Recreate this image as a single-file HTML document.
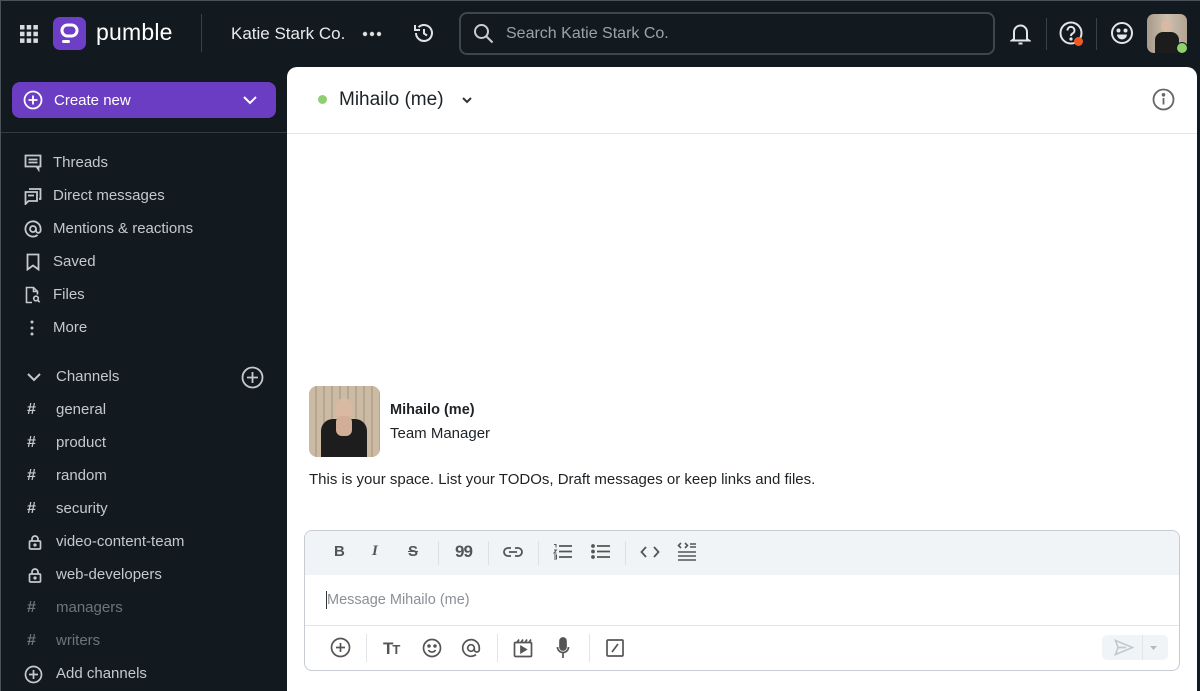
<!DOCTYPE html>
<html><head><meta charset="utf-8"><style>
*{box-sizing:border-box;margin:0;padding:0}
html,body{width:1200px;height:691px;overflow:hidden}
body{background:#131a1f;font-family:"Liberation Sans",sans-serif;position:relative}
body:after{content:"";position:absolute;left:0;top:0;width:1200px;height:691px;border:1px solid #4a5157;pointer-events:none}
.a{position:absolute;white-space:nowrap}
svg{display:block}
.nav{position:absolute;left:24px;color:#c4c9ce;font-size:15px;display:flex;align-items:center;height:22px}
.nav .t{position:absolute;left:29px;white-space:nowrap;top:2px}
.ch .t{left:32px}
.dim{color:#6d757c}
.tb svg{position:absolute}
</style></head><body>
<!-- top bar -->
<svg class="a" style="left:20px;top:25px" width="18" height="18" viewBox="0 0 18 18" fill="#d9dcdf"><rect x="0" y="0" width="4.5" height="4.5"/><rect x="6.7" y="0" width="4.5" height="4.5"/><rect x="13.4" y="0" width="4.5" height="4.5"/><rect x="0" y="6.7" width="4.5" height="4.5"/><rect x="6.7" y="6.7" width="4.5" height="4.5"/><rect x="13.4" y="6.7" width="4.5" height="4.5"/><rect x="0" y="13.4" width="4.5" height="4.5"/><rect x="6.7" y="13.4" width="4.5" height="4.5"/><rect x="13.4" y="13.4" width="4.5" height="4.5"/></svg>
<div class="a" style="left:53px;top:17px;width:33px;height:33px;border-radius:7px;background:#6d3fc6"></div>
<svg class="a" style="left:53px;top:17px" width="33" height="33" viewBox="0 0 33 33"><rect x="9" y="8" width="15" height="11" rx="5.5" fill="none" stroke="#fff" stroke-width="3"/><rect x="9" y="23" width="8" height="3" rx="1.5" fill="#fff"/></svg>
<div class="a" style="left:96px;top:19px;color:#fff;font-size:23px;font-weight:500;letter-spacing:.2px">pumble</div>
<div class="a" style="left:201px;top:14px;width:1px;height:38px;background:#3a4249"></div>
<div class="a" style="left:231px;top:24px;color:#e8eaec;font-size:17px">Katie Stark Co.</div>
<svg class="a" style="left:362px;top:31px" width="20" height="6"><circle cx="3" cy="3" r="2.2" fill="#ddd"/><circle cx="10" cy="3" r="2.2" fill="#ddd"/><circle cx="17" cy="3" r="2.2" fill="#ddd"/></svg>
<svg class="a" style="left:412px;top:21px" width="24" height="24" viewBox="0 0 24 24" fill="none" stroke="#e0e3e5" stroke-width="2"><path d="M4 12a8 8 0 1 0 2.5-5.8"/><path d="M3 4v5h5" /><path d="M12 8v4.5l3 2"/></svg>
<div class="a" style="left:459px;top:12px;width:536px;height:43px;border:2px solid #3d4750;border-radius:8px"></div>
<svg class="a" style="left:473px;top:23px" width="22" height="22" viewBox="0 0 22 22" fill="none" stroke="#c9cdd1" stroke-width="2"><circle cx="8.5" cy="8.5" r="6.5"/><path d="M13.5 13.5l6 6"/></svg>
<div class="a" style="left:506px;top:25px;color:#9aa3ab;font-size:16px">Search Katie Stark Co.</div>
<svg class="a" style="left:1010px;top:22px" width="21" height="24" viewBox="0 0 21 24" fill="none" stroke="#e3e5e7" stroke-width="2"><path d="M4 17V10a6.5 6.5 0 0 1 13 0v7l2 1.5H2z"/><path d="M8.5 21.5h4"/></svg>
<div class="a" style="left:1046px;top:18px;width:1px;height:32px;background:#3a4249"></div>
<svg class="a" style="left:1059px;top:21px" width="28" height="28" viewBox="0 0 28 28" fill="none" stroke="#e3e5e7" stroke-width="2"><circle cx="12" cy="12" r="10.5"/><path d="M8.5 9.5a3.5 3.5 0 1 1 5 3c-1 .6-1.5 1.2-1.5 2.5"/><circle cx="12" cy="18" r=".6" fill="#e3e5e7"/><circle cx="19.5" cy="20.5" r="4.5" fill="#ef5a24" stroke="none"/></svg>
<div class="a" style="left:1096px;top:18px;width:1px;height:32px;background:#3a4249"></div>
<svg class="a" style="left:1110px;top:21px" width="24" height="24" viewBox="0 0 24 24" fill="none" stroke="#e3e5e7" stroke-width="2"><circle cx="12" cy="12" r="10"/><circle cx="8.5" cy="9.5" r="1" fill="#e3e5e7"/><circle cx="15.5" cy="9.5" r="1" fill="#e3e5e7"/><path d="M7 13.5h10a5 5 0 0 1-10 0z" fill="#e3e5e7" stroke="none"/></svg>
<div class="a" style="left:1147px;top:14px;width:40px;height:39px;border-radius:7px;overflow:hidden;background:linear-gradient(90deg,#a8998a,#cdbfae 50%,#b3a493)">
<div class="a" style="left:14px;top:6px;width:11px;height:12px;border-radius:50%;background:#d7b9a4"></div>
<div class="a" style="left:8px;top:18px;width:24px;height:22px;border-radius:8px 8px 0 0;background:#1c1c1c"></div></div>
<div class="a" style="left:1176px;top:42px;width:12px;height:12px;border-radius:50%;background:#8fd16b;border:1.5px solid #131a1f"></div>

<!-- sidebar -->
<div class="a" style="left:12px;top:82px;width:264px;height:36px;border-radius:8px;background:#6a3dc2"></div>
<svg class="a" style="left:23px;top:90px" width="20" height="20" viewBox="0 0 20 20" fill="none" stroke="#fff" stroke-width="1.8"><circle cx="10" cy="10" r="8.5"/><path d="M10 5.5v9M5.5 10h9"/></svg>
<div class="a" style="left:54px;top:92px;color:#fff;font-size:15px">Create new</div>
<svg class="a" style="left:242px;top:94px" width="16" height="12" viewBox="0 0 16 12" fill="none" stroke="#fff" stroke-width="2"><path d="M2 3l6 6 6-6"/></svg>
<div class="a" style="left:0;top:132px;width:287px;height:1px;background:#343b41"></div>

<div class="nav" style="top:152px"><svg width="18" height="18" viewBox="0 0 18 18" fill="none" stroke="#c4c9ce" stroke-width="1.8"><path d="M1.5 1.5h15v11h-2v3l-2-3h-11z"/><path d="M4.5 5.5h9M4.5 8.5h9"/></svg><span class="t">Threads</span></div>
<div class="nav" style="top:185px"><svg width="18" height="18" viewBox="0 0 18 18" fill="none" stroke="#c4c9ce" stroke-width="1.8"><path d="M5 2h11.5v10H15"/><path d="M1.5 5h11.5v9H4.5l-3 3z"/><path d="M4 8.5h6"/></svg><span class="t">Direct messages</span></div>
<div class="nav" style="top:218px"><svg width="18" height="18" viewBox="0 0 18 18" fill="none" stroke="#c4c9ce" stroke-width="1.8"><circle cx="9" cy="9" r="3"/><path d="M12 9v1.5a2.3 2.3 0 0 0 4.6 0V9a7.6 7.6 0 1 0-3 6"/></svg><span class="t">Mentions &amp; reactions</span></div>
<div class="nav" style="top:251px"><svg width="18" height="18" viewBox="0 0 18 18" fill="none" stroke="#c4c9ce" stroke-width="1.8"><path d="M3.5 1.5h11v15l-5.5-4-5.5 4z"/></svg><span class="t">Saved</span></div>
<div class="nav" style="top:284px"><svg width="18" height="18" viewBox="0 0 18 18" fill="none" stroke="#c4c9ce" stroke-width="1.6"><path d="M8 16.5H2.5v-15h7l4 4v3"/><path d="M9.5 1.5v4h4"/><circle cx="12" cy="12.5" r="2.3"/><path d="M13.7 14.2l2 2"/></svg><span class="t">Files</span></div>
<div class="nav" style="top:317px"><svg width="18" height="18" viewBox="0 0 18 18" fill="#c4c9ce"><circle cx="8" cy="3" r="1.5"/><circle cx="8" cy="9" r="1.5"/><circle cx="8" cy="15" r="1.5"/></svg><span class="t">More</span></div>

<div class="nav ch" style="top:366px;left:26px"><svg width="16" height="16" viewBox="0 0 16 16" fill="none" stroke="#c4c9ce" stroke-width="2"><path d="M2 5l6 6 6-6"/></svg><span class="t" style="left:30px">Channels</span></div>
<svg class="a" style="left:241px;top:366px" width="23" height="23" viewBox="0 0 23 23" fill="none" stroke="#c4c9ce" stroke-width="1.8"><circle cx="11.5" cy="11.5" r="10"/><path d="M11.5 6v11M6 11.5h11"/></svg>

<div class="nav ch" style="top:399px"><span style="font-weight:bold;font-size:16px;margin-left:3px">#</span><span class="t">general</span></div>
<div class="nav ch" style="top:432px"><span style="font-weight:bold;font-size:16px;margin-left:3px">#</span><span class="t">product</span></div>
<div class="nav ch" style="top:465px"><span style="font-weight:bold;font-size:16px;margin-left:3px">#</span><span class="t">random</span></div>
<div class="nav ch" style="top:498px"><span style="font-weight:bold;font-size:16px;margin-left:3px">#</span><span class="t">security</span></div>
<div class="nav ch" style="top:531px"><svg width="16" height="16" viewBox="0 0 16 16" fill="none" stroke="#c4c9ce" stroke-width="1.7" style="margin-left:3px"><rect x="2.5" y="7" width="11" height="8" rx="1"/><path d="M5 7V5a3 3 0 0 1 6 0v2"/><circle cx="8" cy="11" r=".8" fill="#c4c9ce"/></svg><span class="t">video-content-team</span></div>
<div class="nav ch" style="top:564px"><svg width="16" height="16" viewBox="0 0 16 16" fill="none" stroke="#c4c9ce" stroke-width="1.7" style="margin-left:3px"><rect x="2.5" y="7" width="11" height="8" rx="1"/><path d="M5 7V5a3 3 0 0 1 6 0v2"/><circle cx="8" cy="11" r=".8" fill="#c4c9ce"/></svg><span class="t">web-developers</span></div>
<div class="nav ch dim" style="top:597px"><span style="font-weight:bold;font-size:16px;margin-left:3px">#</span><span class="t">managers</span></div>
<div class="nav ch dim" style="top:630px"><span style="font-weight:bold;font-size:16px;margin-left:3px">#</span><span class="t">writers</span></div>
<div class="nav ch" style="top:663px"><svg width="19" height="19" viewBox="0 0 19 19" fill="none" stroke="#c4c9ce" stroke-width="1.7"><circle cx="9.5" cy="9.5" r="8"/><path d="M9.5 5v9M5 9.5h9"/></svg><span class="t">Add channels</span></div>

<!-- main -->
<div class="a" style="left:287px;top:67px;width:910px;height:630px;background:#fff;border-radius:10px 10px 0 0"></div>
<div class="a" style="left:287px;top:133px;width:910px;height:1px;background:#e4e7ea"></div>
<div class="a" style="left:318px;top:95px;width:9px;height:9px;border-radius:50%;background:#8fcf6f"></div>
<div class="a" style="left:339px;top:89px;color:#1d2226;font-size:19px;font-weight:500">Mihailo (me)</div>
<svg class="a" style="left:461px;top:96px" width="12" height="9" viewBox="0 0 12 9" fill="none" stroke="#333" stroke-width="2"><path d="M2 2l4 4 4-4"/></svg>
<svg class="a" style="left:1152px;top:88px" width="23" height="23" viewBox="0 0 23 23" fill="none" stroke="#666" stroke-width="1.8"><circle cx="11.5" cy="11.5" r="10"/><path d="M11.5 10v6.5"/><circle cx="11.5" cy="6.8" r=".9" fill="#666"/></svg>

<div class="a" style="left:309px;top:386px;width:71px;height:71px;border-radius:8px;overflow:hidden;background:repeating-linear-gradient(90deg,#cbbba5 0 6px,#b8a78f 6px 8px)">
<div class="a" style="left:26px;top:12px;width:18px;height:22px;border-radius:50%;background:#d9b9a2"></div>
<div class="a" style="left:12px;top:33px;width:46px;height:38px;border-radius:12px 12px 0 0;background:#1d1d1d"></div>
<div class="a" style="left:27px;top:30px;width:16px;height:20px;background:#d2ae96;border-radius:6px"></div></div>
<div class="a" style="left:390px;top:402px;color:#1d2226;font-size:14.5px;font-weight:bold">Mihailo (me)</div>
<div class="a" style="left:390px;top:425px;color:#1d2226;font-size:15px">Team Manager</div>
<div class="a" style="left:309px;top:471px;color:#1d2226;font-size:15px">This is your space. List your TODOs, Draft messages or keep links and files.</div>

<!-- composer -->
<div class="a" style="left:304px;top:530px;width:876px;height:141px;border:1px solid #c6ccd2;border-radius:8px;overflow:hidden">
<div class="a" style="left:0;top:0;width:876px;height:44px;background:#f1f4f7"></div>
<div class="a" style="left:0;top:94px;width:876px;height:1px;background:#e1e5e9"></div>
</div>
<div class="a tb" style="left:0;top:0">
<div class="a" style="left:334px;top:543px;font-weight:bold;font-size:15px;color:#555">B</div>
<div class="a" style="left:372px;top:543px;font-style:italic;font-weight:bold;font-size:15px;color:#555;font-family:'Liberation Serif',serif">I</div>
<div class="a" style="left:408px;top:543px;font-weight:bold;font-size:15px;color:#555;text-decoration:line-through">S</div>
<div class="a" style="left:438px;top:541px;width:1px;height:24px;background:#dde1e5"></div>
<div class="a" style="left:455px;top:542px;font-weight:bold;font-size:17px;color:#555;letter-spacing:-1px">99</div>
<div class="a" style="left:488px;top:541px;width:1px;height:24px;background:#dde1e5"></div>
<svg style="left:503px;top:545px" width="20" height="14" viewBox="0 0 20 14" fill="none" stroke="#555" stroke-width="1.8"><path d="M8 3H5a4 4 0 0 0 0 8h3M12 3h3a4 4 0 0 1 0 8h-3M6 7h8"/></svg>
<div class="a" style="left:538px;top:541px;width:1px;height:24px;background:#dde1e5"></div>
<svg style="left:553px;top:543px" width="20" height="17" viewBox="0 0 20 17" fill="none" stroke="#555" stroke-width="1.8"><path d="M6 3h13M6 8.5h13M6 14h13"/><path d="M1 1.5h2v3M1 7h2.5l-2.5 3h2.5M1 12h2.5v4H1M1 14h2" stroke-width="1"/></svg>
<svg style="left:591px;top:543px" width="20" height="17" viewBox="0 0 20 17" fill="none" stroke="#555" stroke-width="1.8"><path d="M6 3h13M6 8.5h13M6 14h13"/><circle cx="2" cy="3" r="1" fill="#555"/><circle cx="2" cy="8.5" r="1" fill="#555"/><circle cx="2" cy="14" r="1" fill="#555"/></svg>
<div class="a" style="left:625px;top:541px;width:1px;height:24px;background:#dde1e5"></div>
<svg style="left:640px;top:545px" width="20" height="14" viewBox="0 0 20 14" fill="none" stroke="#555" stroke-width="1.8"><path d="M6 2L1.5 7 6 12M14 2l4.5 5L14 12"/></svg>
<svg style="left:677px;top:541px" width="20" height="21" viewBox="0 0 20 21" fill="none" stroke="#555" stroke-width="1.6"><path d="M4 2L1.5 4.5 4 7M8 2l2.5 2.5L8 7M13 3h6M13 6h6M1 11h18M1 15h18M1 19h18"/></svg>

<div class="a" style="left:326px;top:591px;width:1px;height:18px;background:#333"></div>
<div class="a" style="left:327px;top:592px;color:#8a9096;font-size:14.5px">Message Mihailo (me)</div>

<svg style="left:330px;top:637px" width="21" height="21" viewBox="0 0 21 21" fill="none" stroke="#555" stroke-width="1.7"><circle cx="10.5" cy="10.5" r="9"/><path d="M10.5 6v9M6 10.5h9"/></svg>
<div class="a" style="left:366px;top:634px;width:1px;height:28px;background:#e1e5e9"></div>
<div class="a" style="left:383px;top:639px;font-weight:bold;font-size:17px;color:#555;letter-spacing:-1px">T<span style="font-size:13px">T</span></div>
<svg style="left:422px;top:638px" width="20" height="20" viewBox="0 0 20 20" fill="none" stroke="#555" stroke-width="1.7"><circle cx="10" cy="10" r="8.5"/><circle cx="7" cy="8" r=".9" fill="#555"/><circle cx="13" cy="8" r=".9" fill="#555"/><path d="M6.5 12a4 4 0 0 0 7 0"/></svg>
<svg style="left:461px;top:638px" width="20" height="20" viewBox="0 0 20 20" fill="none" stroke="#555" stroke-width="1.7"><circle cx="10" cy="10" r="3.3"/><path d="M13.3 10v1.5a2.5 2.5 0 0 0 5 0V10a8.3 8.3 0 1 0-3.3 6.6"/></svg>
<div class="a" style="left:497px;top:634px;width:1px;height:28px;background:#e1e5e9"></div>
<svg style="left:513px;top:638px" width="20" height="20" viewBox="0 0 20 20" fill="none" stroke="#555" stroke-width="1.7"><rect x="1.5" y="4.5" width="17" height="14" rx="1"/><path d="M4 4.5l2-3M8 4.5l2-3M12 4.5l2-3M16 4.5l2-3"/><path d="M8 8.5v6l5-3z" fill="#555"/></svg>
<svg style="left:556px;top:637px" width="14" height="22" viewBox="0 0 14 22" fill="none" stroke="#555" stroke-width="1.7"><rect x="4" y="1" width="6" height="12" rx="3" fill="#555"/><path d="M1.5 10a5.5 5.5 0 0 0 11 0M7 16v5"/></svg>
<div class="a" style="left:589px;top:634px;width:1px;height:28px;background:#e1e5e9"></div>
<svg style="left:606px;top:639px" width="18" height="18" viewBox="0 0 18 18" fill="none" stroke="#555" stroke-width="1.7"><rect x="1" y="1" width="16" height="16" rx="1"/><path d="M6 13l6-8"/></svg>

<div class="a" style="left:1102px;top:635px;width:66px;height:25px;border-radius:5px;background:#f1f4f7"></div>
<div class="a" style="left:1142px;top:635px;width:1px;height:25px;background:#e1e5e9"></div>
<svg style="left:1114px;top:639px" width="20" height="17" viewBox="0 0 20 17" fill="none" stroke="#c3c9ce" stroke-width="1.7"><path d="M1.5 1.5l17 7-17 7 2.5-7z M4 8.5h8"/></svg>
<svg style="left:1149px;top:645px" width="9" height="6" viewBox="0 0 9 6"><path d="M1 1h7L4.5 5z" fill="#b3b9be"/></svg>
</div>
</body></html>
